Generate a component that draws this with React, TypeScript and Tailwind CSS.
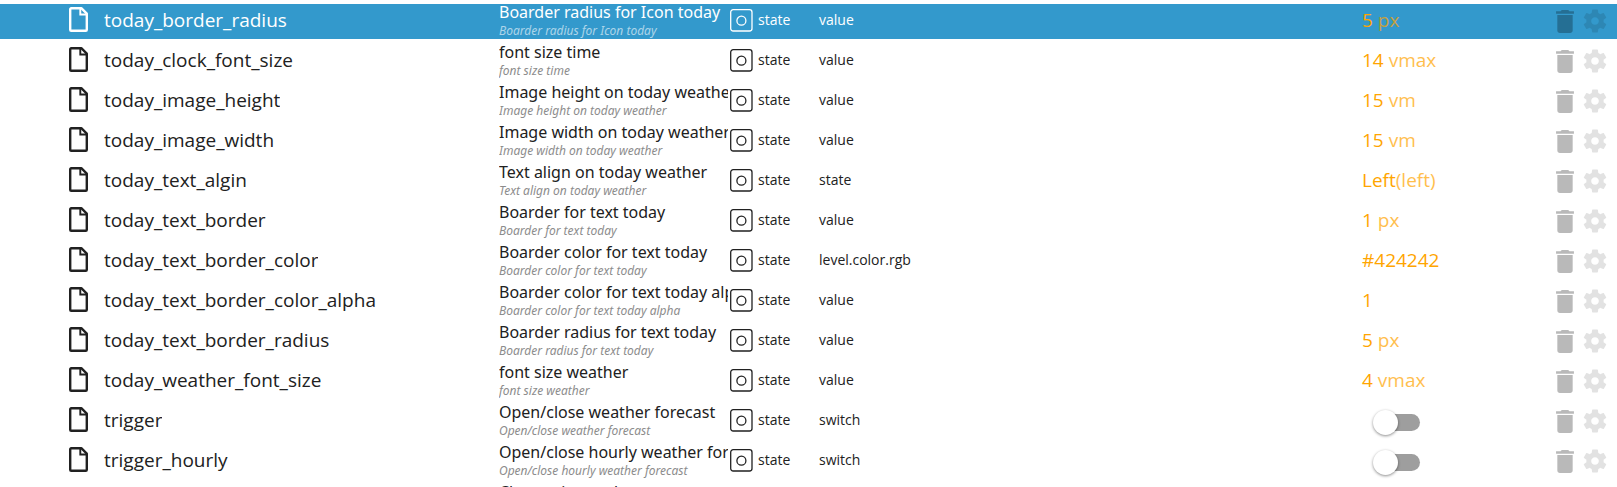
import React from "react";

type Row = {
  id: string;
  name: string;
  role: string;
  value?: string;
  unit?: string;
  selected?: boolean;
};

const rows: Row[] = [
  { id: "today_border_radius", name: "Boarder radius for Icon today", role: "value", value: "5", unit: " px", selected: true },
  { id: "today_clock_font_size", name: "font size time", role: "value", value: "14", unit: " vmax" },
  { id: "today_image_height", name: "Image height on today weather", role: "value", value: "15", unit: " vm" },
  { id: "today_image_width", name: "Image width on today weather", role: "value", value: "15", unit: " vm" },
  { id: "today_text_algin", name: "Text align on today weather", role: "state", value: "Left", unit: "(left)" },
  { id: "today_text_border", name: "Boarder for text today", role: "value", value: "1", unit: " px" },
  { id: "today_text_border_color", name: "Boarder color for text today", role: "level.color.rgb", value: "#424242" },
  { id: "today_text_border_color_alpha", name: "Boarder color for text today alpha", role: "value", value: "1" },
  { id: "today_text_border_radius", name: "Boarder radius for text today", role: "value", value: "5", unit: " px" },
  { id: "today_weather_font_size", name: "font size weather", role: "value", value: "4", unit: " vmax" },
  { id: "trigger", name: "Open/close weather forecast", role: "switch" },
  { id: "trigger_hourly", name: "Open/close hourly weather forecast", role: "switch" },
  { id: "using_pad", name: "Close using pad", role: "switch" },
];

function FileIcon() {
  return (
    <svg viewBox="0 0 19 25" className="h-[25px] w-[19px] shrink-0" fill="none" stroke="currentColor" aria-hidden="true">
      <path d="M2.200 1.200H12.300L17.800 6.700V22.800a1 1 0 0 1-1 1H2.200a1 1 0 0 1-1-1V2.200a1 1 0 0 1 1-1Z" strokeWidth="2.400" strokeLinejoin="round" />
      <path d="M11.300 1.500V7.500H17.500" strokeWidth="1.900" />
    </svg>
  );
}

function StateIcon() {
  return (
    <svg viewBox="0 0 23 23" className="size-[23px] shrink-0" fill="none" stroke="currentColor" aria-hidden="true">
      <rect x="0.700" y="0.700" width="21.300" height="21.300" rx="2.500" strokeWidth="1.300" />
      <circle cx="11.400" cy="11.700" r="4.500" strokeWidth="1.300" />
    </svg>
  );
}

function TrashIcon() {
  return (
    <svg viewBox="5 3 14 18" className="h-[23px] w-[18px]" fill="currentColor" aria-hidden="true">
      <path d="M6 19c0 1.100.9 2 2 2h8c1.100 0 2-.9 2-2V7H6v12zM19 4h-3.500l-1-1h-5l-1 1H5v2h14V4z" />
    </svg>
  );
}

function GearIcon() {
  return (
    <svg viewBox="2 2 20 20" className="size-[24px]" fill="currentColor" aria-hidden="true">
      <path d="M19.140 12.940c.04-.3.060-.610.060-.940 0-.320-.020-.640-.070-.940l2.030-1.580c.180-.140.230-.410.120-.610l-1.920-3.320c-.120-.220-.370-.290-.590-.220l-2.390.960c-.5-.380-1.030-.7-1.620-.940l-.360-2.540c-.040-.240-.240-.410-.480-.410h-3.840c-.240 0-.430.170-.470.410l-.360 2.540c-.590.240-1.130.570-1.620.940l-2.390-.960c-.220-.080-.470 0-.590.220L2.740 8.870c-.120.210-.080.470.120.610l2.030 1.580c-.050.3-.090.630-.090.940s.020.640.070.940l-2.030 1.580c-.180.140-.230.410-.120.610l1.920 3.320c.120.220.370.290.590.220l2.390-.960c.5.380 1.030.7 1.620.940l.360 2.540c.050.240.240.410.480.410h3.840c.240 0 .440-.170.470-.410l.360-2.540c.590-.240 1.130-.560 1.620-.940l2.390.960c.220.080.470 0 .590-.220l1.920-3.320c.120-.220.070-.470-.120-.610l-2.010-1.580zM12 15.200c-1.770 0-3.200-1.430-3.200-3.200s1.430-3.200 3.200-3.200 3.200 1.430 3.200 3.200-1.430 3.200-3.200 3.200z" />
    </svg>
  );
}

function Toggle({ label }: { label: string }) {
  return (
    <label className="ml-3 mt-1 flex h-6 w-12 items-center">
      <input type="checkbox" role="switch" aria-label={label} className="peer sr-only" />
      <span className="flex h-[17px] w-[46px] items-center rounded-full bg-[#9e9e9e] before:-ml-px before:size-[25px] before:shrink-0 before:rounded-full before:bg-white before:shadow-[0_1px_3px_rgba(0,0,0,0.45)] peer-checked:justify-end" />
    </label>
  );
}

function StateRow({ row }: { row: Row }) {
  return (
    <tr className={row.selected ? "h-10 bg-[#3399cc] text-white" : "h-10 text-[#212121]"}>
      <td className="p-0 pl-[69px]">
        <div className="flex h-10 items-center gap-4">
          <FileIcon />
          <span className="truncate pt-0.5 text-[19px] leading-6">{row.id}</span>
        </div>
      </td>
      <td className="overflow-hidden p-0 pr-0.5 font-['Noto_Sans','Open_Sans',sans-serif]">
        <div className="h-10 overflow-hidden whitespace-nowrap pt-[3px]">
          <div className="text-[16px] leading-5">{row.name}</div>
          <div className={row.selected ? "text-[12px] italic leading-[18px] text-white/60" : "text-[12px] italic leading-[18px] text-[#8c8c8c]"}>
            {row.name}
          </div>
        </div>
      </td>
      <td className="p-0">
        <div className="flex items-center gap-[5px] pt-0.5">
          <StateIcon />
          <span className="text-[14px] leading-5">state</span>
        </div>
      </td>
      <td className="p-0 pt-0.5 text-[14px] leading-5">{row.role}</td>
      <td className="p-0 pt-0.5 text-[19px] leading-6 text-[#ffa500]">
        {row.value ? (
          <>
            <span>{row.value}</span>
            <span className="opacity-70">{row.unit}</span>
          </>
        ) : (
          <Toggle label={row.id} />
        )}
      </td>
      <td className="p-0">
        <div className="flex items-center gap-[9px] pt-1 text-black">
          <button type="button" aria-label={`Delete ${row.id}`} className="opacity-[0.27]">
            <TrashIcon />
          </button>
          <button type="button" aria-label={`Settings of ${row.id}`} className="opacity-[0.11]">
            <GearIcon />
          </button>
        </div>
      </td>
    </tr>
  );
}

export default function App() {
  return (
    <main className="h-screen overflow-hidden bg-white pt-1 font-['Open_Sans','Noto_Sans',sans-serif]">
      <div className="overflow-hidden">
        <table className="-mt-[5px] w-full table-fixed border-collapse">
          <colgroup>
            <col className="w-[499px]" />
            <col className="w-[231px]" />
            <col className="w-[89px]" />
            <col />
            <col className="w-[194px]" />
            <col className="w-[61px]" />
          </colgroup>
          <tbody>
            {rows.map((row) => (
              <StateRow key={row.id} row={row} />
            ))}
          </tbody>
        </table>
      </div>
    </main>
  );
}
